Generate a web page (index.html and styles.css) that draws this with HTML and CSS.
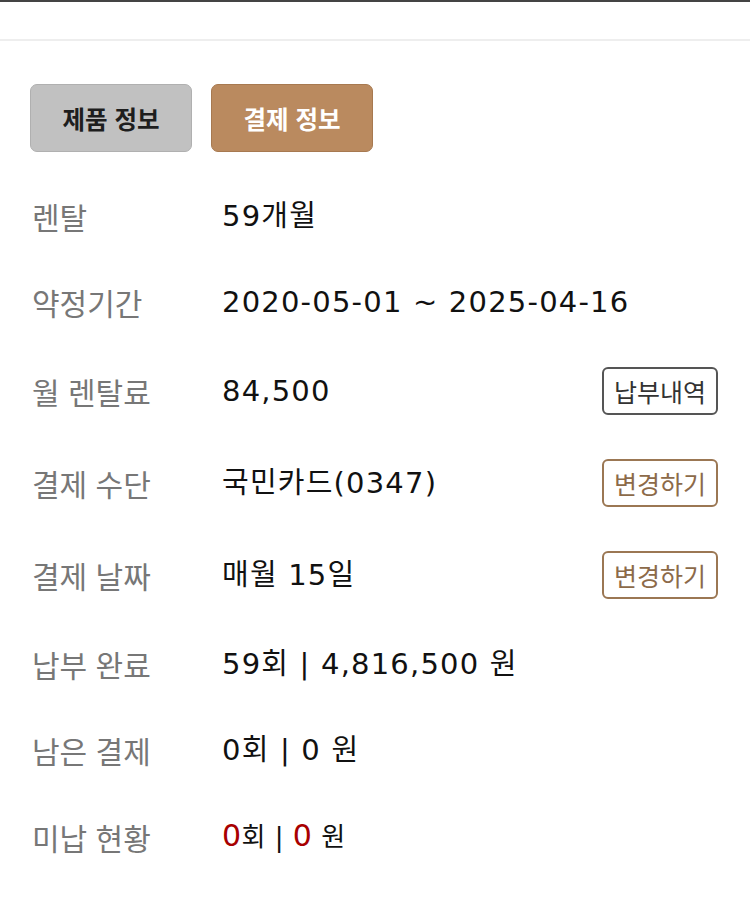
FILE: index.html
```html
<!DOCTYPE html>
<html lang="ko">
<head>
<meta charset="utf-8">
<link rel="stylesheet" href="styles.css">
</head>
<body>
<div class="page">
  <div class="topbar"></div>
  <div class="tabs">
    <button class="tab tab-off">제품 정보</button>
    <button class="tab tab-on">결제 정보</button>
  </div>
  <div class="rows">
    <div class="row"><div class="label">렌탈</div><div class="value">59개월</div></div>
    <div class="row"><div class="label">약정기간</div><div class="value">2020-05-01 ~ 2025-04-16</div></div>
    <div class="row"><div class="label">월 렌탈료</div><div class="value">84,500</div><button class="act act-dark">납부내역</button></div>
    <div class="row"><div class="label">결제 수단</div><div class="value">국민카드(0347)</div><button class="act act-brown">변경하기</button></div>
    <div class="row"><div class="label">결제 날짜</div><div class="value">매월 15일</div><button class="act act-brown">변경하기</button></div>
    <div class="row"><div class="label">납부 완료</div><div class="value">59회 | 4,816,500 원</div></div>
    <div class="row"><div class="label">남은 결제</div><div class="value">0회 | 0 원</div></div>
    <div class="row"><div class="label">미납 현황</div><div class="value value-sm"><span class="red">0</span>회 | <span class="red">0</span> 원</div></div>
  </div>
</div>
</body>
</html>
```
FILE: styles.css
```css
* { box-sizing: border-box; }
html, body { margin: 0; padding: 0; background: #fff; }
body { font-family: "Noto Sans CJK KR", "Noto Sans", sans-serif; }
.page { width: 750px; }
.topbar {
  height: 41px;
  border-top: 2px solid #444;
  border-bottom: 2px solid #eeeeee;
}
.tabs {
  display: flex;
  gap: 19px;
  padding: 43px 0 0 30px;
}
.tab {
  width: 162px;
  height: 68px;
  border-radius: 7px;
  font-family: "Noto Sans CJK KR", sans-serif;
  font-size: 24.5px;
  font-weight: 700;
  padding: 0;
}
.tab-off { background: #c1c1c1; border: 1px solid #b0b0b0; color: #1e1e1e; }
.tab-on { background: #ba8a5f; border: 1px solid #a77950; color: #fff; }
.rows { padding: 21px 32px 0 32px; }
.row {
  display: flex;
  align-items: center;
  padding: 22px 0;
  min-height: 86px;
}
.label {
  width: 190px;
  font-size: 30px;
  line-height: 42px;
  color: #777;
}
.value {
  flex: 1;
  font-family: "DejaVu Sans", "Noto Sans CJK KR", sans-serif;
  font-size: 29px;
  letter-spacing: 1.2px;
  line-height: 42px;
  color: #111;
}
.value-sm { font-size: 26px; letter-spacing: 0.5px; }
.red { color: #a80000; font-size: 30px; }
.act {
  height: 48px;
  padding: 0 10px;
  border-radius: 6px;
  background: #fff;
  font-family: "Noto Sans CJK KR", sans-serif;
  font-size: 25px;
}
.act-dark { border: 2px solid #555; color: #333; }
.act-brown { border: 2px solid #9b7753; color: #8c6a49; }
```
